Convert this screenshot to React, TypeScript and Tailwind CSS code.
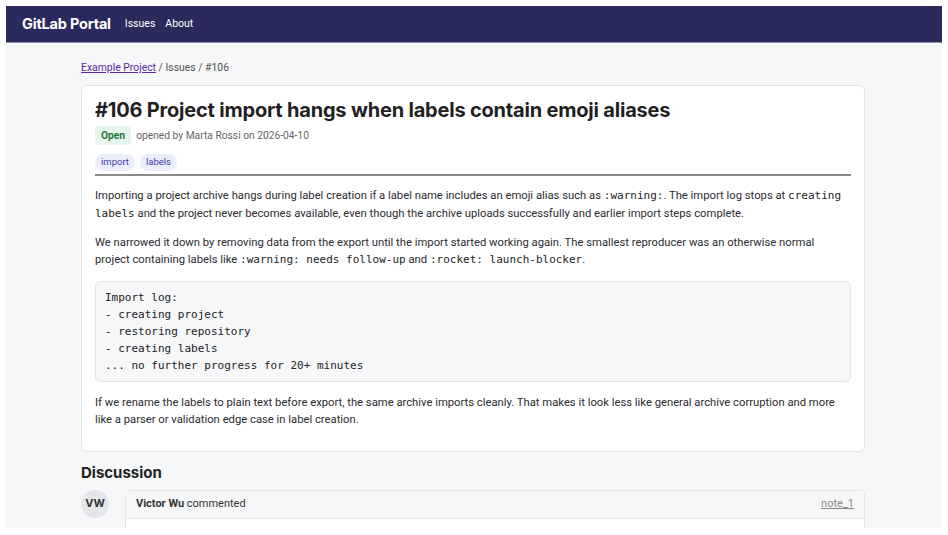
import React from 'react';

const mono = "font-['DejaVu_Sans_Mono',Menlo,monospace]";

const Code = ({ children }: { children: React.ReactNode }) => (
  <code className={`${mono} text-[11px] text-[#222]`}>{children}</code>
);

const App: React.FC = () => {
  return (
    <div className="w-[948px] h-[535px] bg-white p-[6px] overflow-hidden font-['Roboto',sans-serif]">
      <div className="h-[522px] bg-[#f6f7f9] overflow-hidden">
        {/* Top bar */}
        <header className="h-[37px] bg-[#2a2a5c] border-b border-[#8e8eb8] flex items-center px-4 gap-[14px]">
          <span className="text-white font-bold text-[14.5px] font-['Inter',sans-serif] tracking-[-0.2px]">GitLab Portal</span>
          <nav className="flex gap-[10px] text-white text-[10.5px]">
            <a>Issues</a>
            <a>About</a>
          </nav>
        </header>

        <main className="ml-[75px] w-[784px]">
          {/* Breadcrumb */}
          <div className="pt-[18px] pb-[10px] text-[10.4px] leading-[14px] text-[#555]">
            <a className="text-[#5b2a9e] underline">Example Project</a> / Issues / #106
          </div>

          {/* Issue card */}
          <section className="bg-white border border-[#e3e5e8] rounded-[6px] px-[13px] pt-[11px] pb-[22px]">
            <h1 className="text-[20px] leading-[26px] font-bold text-[#1f1f24] font-['Inter',sans-serif] tracking-[-0.2px]">
              #106 Project import hangs when labels contain emoji aliases
            </h1>
            <div className="flex items-center gap-[5px] mt-[3px] text-[10.25px] text-[#666]">
              <span className="bg-[#e8f5ec] text-[#1f7a3a] font-bold px-[6px] py-[2px] rounded-[4px]">Open</span>
              <span>opened by Marta Rossi on 2026-04-10</span>
            </div>
            <div className="flex gap-[5px] mt-[9px] text-[9.5px]">
              <span className="bg-[#ecedfb] text-[#3b3aa8] rounded-full px-[6px] py-[1px]">import</span>
              <span className="bg-[#ecedfb] text-[#3b3aa8] rounded-full px-[6px] py-[1px]">labels</span>
            </div>
            <hr className="mt-[3px] border-0 border-t-2 border-[#8a8a8a]" />

            <div className="mt-[11px] text-[11.25px] leading-[18px] text-[#2b2b30]">
              <p>
                Importing a project archive hangs during label creation if a label name includes an emoji alias such as{' '}
                <Code>:warning:</Code>. The import log stops at <Code>creating labels</Code> and the project never becomes
                available, even though the archive uploads successfully and earlier import steps complete.
              </p>
              <p className="mt-[11px] leading-[17.5px]">
                We narrowed it down by removing data from the export until the import started working again. The smallest
                reproducer was an otherwise normal project containing labels like <Code>:warning: needs follow-up</Code> and{' '}
                <Code>:rocket: launch-blocker</Code>.
              </p>
              <pre
                className={`${mono} mt-[12px] bg-[#f6f7f9] border border-[#e3e5e8] rounded-[5px] px-[9px] py-[7px] text-[11px] leading-[17px] text-[#222]`}
              >
{`Import log:
- creating project
- restoring repository
- creating labels
... no further progress for 20+ minutes`}
              </pre>
              <p className="mt-[12px] leading-[17.5px]">
                If we rename the labels to plain text before export, the same archive imports cleanly. That makes it look less
                like general archive corruption and more like a parser or validation edge case in label creation.
              </p>
            </div>
          </section>

          {/* Discussion */}
          <h2 className="mt-[12px] text-[15px] leading-[18px] font-bold text-[#1f1f24] font-['Inter',sans-serif]">Discussion</h2>
          <div className="flex gap-4 mt-[8px]">
            <div className="w-[28px] h-[28px] rounded-full bg-[#e5e6ea] flex items-center justify-center text-[11px] font-bold text-[#333] shrink-0 font-['Inter',sans-serif]">
              VW
            </div>
            <div className="flex-1 bg-white border border-[#e3e5e8] rounded-t-[5px] h-[60px]">
              <div className="h-[28px] bg-[#f6f7f9] border-b border-[#e3e5e8] flex items-center justify-between px-[10px] text-[11px] text-[#333]">
                <span>
                  <b>Victor Wu</b> commented
                </span>
                <a className="text-[#888] underline">note_1</a>
              </div>
            </div>
          </div>
        </main>
      </div>
    </div>
  );
};

export default App;
